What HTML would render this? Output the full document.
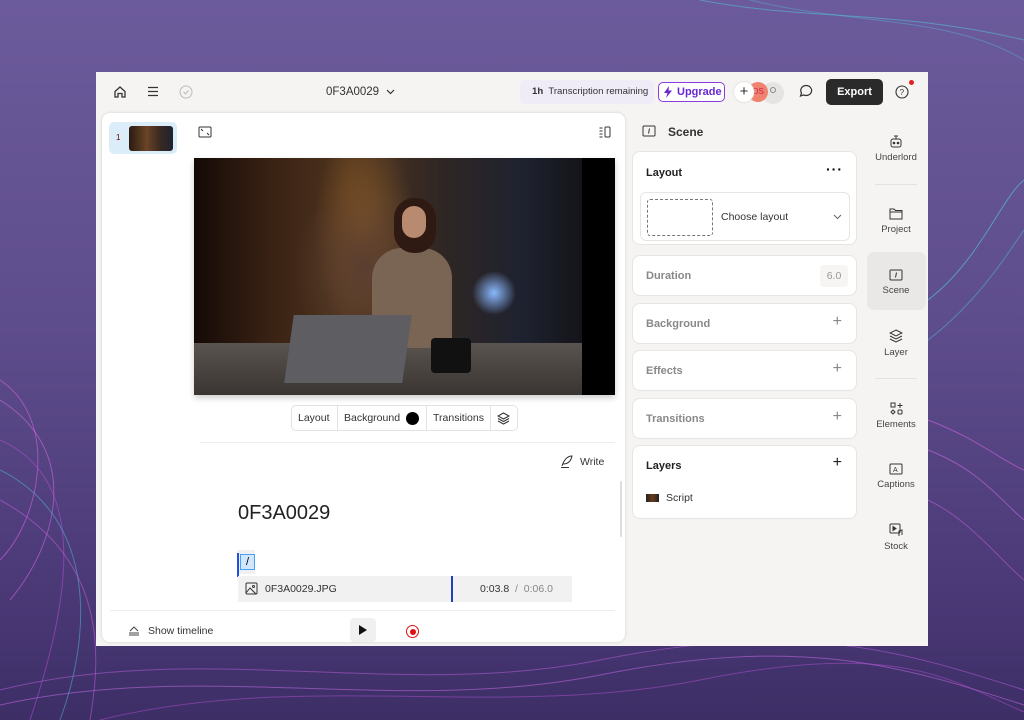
<!DOCTYPE html>
<html><head><style>
*{box-sizing:border-box;margin:0;padding:0}
body{width:1024px;height:720px;overflow:hidden;position:relative;font-family:"Liberation Sans",sans-serif;background:linear-gradient(180deg,#6c5b9c 0%,#5e4d8c 45%,#4c3a78 80%,#3d2e66 100%)}
.win{position:absolute;left:96px;top:72px;width:832px;height:574px;background:#f5f4f2}
.t{position:absolute;font-size:11px;color:#333;white-space:nowrap}
.card{position:absolute;left:632px;width:225px;background:#fff;border:1px solid #e6e5e2;border-radius:8px}
.card .h{position:absolute;left:13px;font-size:11px;color:#888;font-weight:bold}
.card .p{position:absolute;right:14px;font-size:16px;color:#888;font-weight:300}
.side{position:absolute;left:866px;width:60px;text-align:center;font-size:9.5px;color:#444}
.side svg{display:block;margin:0 auto 4px}
</style></head><body>
<svg style="position:absolute;left:0;top:0" width="1024" height="720">
<g fill="none" stroke-width="1">
<path d="M0 380 C60 420 40 520 0 560" stroke="#d060e0" opacity=".6"/>
<path d="M0 400 C80 450 60 540 10 600" stroke="#e070f0" opacity=".5"/>
<path d="M0 440 C90 480 70 600 30 720" stroke="#c050d8" opacity=".5"/>
<path d="M0 470 C100 520 90 640 60 720" stroke="#50c0e0" opacity=".5"/>
<path d="M0 500 C110 560 100 660 90 720" stroke="#d060e0" opacity=".5"/>
<path d="M928 300 C980 260 1000 200 1024 180" stroke="#50d0e0" opacity=".6"/>
<path d="M928 340 C980 300 1010 250 1024 230" stroke="#50c0e0" opacity=".5"/>
<path d="M928 420 C980 440 1000 460 1024 470" stroke="#d060e0" opacity=".6"/>
<path d="M928 450 C980 470 1000 500 1024 520" stroke="#e070f0" opacity=".5"/>
<path d="M928 500 C970 520 1000 560 1024 580" stroke="#d060e0" opacity=".5"/>
<path d="M0 690 C200 640 400 700 600 660 S900 650 1024 690" stroke="#c060e0" opacity=".5"/>
<path d="M0 705 C200 660 400 715 600 675 S900 665 1024 705" stroke="#d070f0" opacity=".5"/>
<path d="M100 720 C300 670 500 720 700 680 S950 680 1024 712" stroke="#b050d0" opacity=".5"/>
<path d="M700 0 C800 20 900 10 1024 40" stroke="#50d0e0" opacity=".5"/>
<path d="M750 0 C850 25 950 15 1024 60" stroke="#50c0e0" opacity=".4"/>
</g></svg>
<div class="win">
<svg style="position:absolute;left:17px;top:13px" width="14" height="14" viewBox="0 0 14 14" fill="none" stroke="#333" stroke-width="1.3"><path d="M2 6.5L7 2l5 4.5V12H9V8.5H5V12H2z"/></svg>
<svg style="position:absolute;left:51px;top:14px" width="12" height="11" stroke="#333" stroke-width="1.2"><path d="M1 1.5h10M1 5.5h10M1 9.5h10"/></svg>
<svg style="position:absolute;left:83px;top:13px" width="14" height="14" fill="none" stroke="#bbb"><circle cx="7" cy="7" r="6"/><path d="M4.5 7l2 2 3-3.5"/></svg>
<div class="t" style="left:230px;top:14px;font-size:11.5px">0F3A0029</div>
<svg style="position:absolute;left:290px;top:17px" width="9" height="6" fill="none" stroke="#333" stroke-width="1.2"><path d="M1 1l3.5 3.5L8 1"/></svg>
<div style="position:absolute;left:424px;top:8px;width:134px;height:24px;background:#efecf8;border-radius:6px"></div>
<div class="t" style="left:436px;top:14px;font-size:9.6px"><b>1h</b>&nbsp; Transcription remaining</div>
<div style="position:absolute;left:562px;top:10px;width:67px;height:20px;border:1.5px solid #8a3ee0;border-radius:5px;background:#fff;color:#6a28d0;font-size:11px;font-weight:bold;line-height:17px;padding-left:18px;display:flex;align-items:center">Upgrade</div>
<svg style="position:absolute;left:567px;top:14px" width="10" height="12"><path d="M6 0L1 7h3.5L3 12l6-7.5H5.5z" fill="#6a28d0"/></svg>
<div style="position:absolute;left:666px;top:10px;width:22px;height:22px;border-radius:50%;background:#e6e4e2"></div>
<div style="position:absolute;left:652px;top:10px;width:20px;height:20px;border-radius:50%;background:#f08270;font-size:8px;color:#c24;line-height:20px;text-align:center">OS</div>
<div style="position:absolute;left:638px;top:10px;width:20px;height:20px;border-radius:50%;background:#fff;box-shadow:0 0 2px #ccc;font-size:15px;line-height:19px;text-align:center;color:#333">+</div>
<div style="position:absolute;left:674px;top:15px;width:6px;height:6px;border-radius:50%;border:1px solid #888"></div>
<svg style="position:absolute;left:703px;top:12px" width="14" height="14" fill="none" stroke="#333" stroke-width="1.2"><path d="M7 1.5a5.5 5 0 1 1-2.5 9.4L1.5 12l1-3A5.5 5 0 0 1 7 1.5z"/></svg>
<div style="position:absolute;left:730px;top:7px;width:57px;height:26px;background:#2a2a2a;border-radius:5px;color:#fff;font-size:11px;font-weight:bold;line-height:26px;text-align:center">Export</div>
<svg style="position:absolute;left:799px;top:12px" width="16" height="16" fill="none" stroke="#333" stroke-width="1.1"><circle cx="7" cy="8" r="6"/><text x="4.6" y="11" font-size="8" fill="#333" stroke="none" font-family="Liberation Sans">?</text></svg>
<div style="position:absolute;left:813px;top:8px;width:5px;height:5px;border-radius:50%;background:#e02020"></div>
<div style="position:absolute;left:6px;top:41px;width:523px;height:529px;background:#fff;border-radius:8px;box-shadow:0 0 3px rgba(0,0,0,.15)">
<div style="position:absolute;left:7px;top:9px;width:68px;height:32px;background:#dcedfa;border-radius:5px"></div>
<div class="t" style="left:14px;top:20px;font-size:8px;color:#600">1</div>
<div style="position:absolute;left:27px;top:13px;width:44px;height:25px;border-radius:3px;background:linear-gradient(90deg,#2a1a12,#6a4426 40%,#3a2a22 70%,#1e2230)"></div>
<svg style="position:absolute;left:96px;top:13px" width="14" height="12" fill="none" stroke="#333"><rect x="1" y="1" width="12" height="10" rx="1"/><path d="M3 3l2 2M11 9l-2-2"/></svg>
<svg style="position:absolute;left:497px;top:13px" width="12" height="12" fill="none" stroke="#333"><path d="M0.5 2h3M0.5 5h3M0.5 8h3M0.5 11h3"/><rect x="6" y="1" width="5" height="10" rx="1"/></svg>
<div style="position:absolute;left:92px;top:45px;width:421px;height:237px;background:#000;overflow:hidden;box-shadow:0 3px 6px rgba(0,0,0,.2)">
<div style="position:absolute;left:0;top:0;width:388px;height:237px;background:radial-gradient(ellipse 70px 90px at 170px 110px,#5a3e30,transparent),radial-gradient(ellipse 50px 110px at 170px 70px,rgba(200,130,50,.45),transparent),radial-gradient(circle 22px at 300px 135px,#8ab8ff,transparent),linear-gradient(90deg,#140a06 0%,#3a2214 20%,#4e341e 40%,#2e2624 65%,#1e2230 85%,#141418 100%)"></div>
<div style="position:absolute;left:0;top:185px;width:388px;height:52px;background:linear-gradient(180deg,#5a5450,#3a3432)"></div>
<div style="position:absolute;left:178px;top:90px;width:80px;height:100px;background:#7a6454;border-radius:30px 30px 0 0"></div>
<div style="position:absolute;left:200px;top:40px;width:42px;height:55px;background:#2e1a12;border-radius:20px"></div>
<div style="position:absolute;left:208px;top:48px;width:24px;height:32px;background:#b88a70;border-radius:12px"></div>
<div style="position:absolute;left:95px;top:157px;width:118px;height:68px;background:#5e5e62;transform:skewX(-8deg)"></div>
<div style="position:absolute;left:237px;top:180px;width:40px;height:35px;background:#111;border-radius:4px"></div>
</div>
<div style="position:absolute;left:189px;top:292px;width:227px;height:26px;border:1px solid #e2e2e2;border-radius:5px;font-size:10.5px;color:#333">
<span style="position:absolute;left:6px;top:6px">Layout</span>
<span style="position:absolute;left:45px;top:0;height:24px;border-left:1px solid #e2e2e2"></span>
<span style="position:absolute;left:52px;top:6px">Background</span>
<span style="position:absolute;left:114px;top:6px;width:13px;height:13px;border-radius:50%;background:#000"></span>
<span style="position:absolute;left:134px;top:0;height:24px;border-left:1px solid #e2e2e2"></span>
<span style="position:absolute;left:141px;top:6px">Transitions</span>
<span style="position:absolute;left:198px;top:0;height:24px;border-left:1px solid #e2e2e2"></span>
<svg style="position:absolute;left:205px;top:6px" width="13" height="13" fill="none" stroke="#333"><path d="M6.5 1L12 4 6.5 7 1 4z M1 6.5l5.5 3 5.5-3 M1 9l5.5 3 5.5-3"/></svg>
</div>
<div style="position:absolute;left:98px;top:329px;width:415px;border-top:1px solid #eee"></div>
<svg style="position:absolute;left:458px;top:341px" width="14" height="14" fill="none" stroke="#333"><path d="M2 12c2-6 5-10 10-10-1 5-4 8-9 8M1 13.5h8"/></svg>
<div class="t" style="left:478px;top:343px;font-size:10.5px">Write</div>
<div class="t" style="left:136px;top:389px;font-size:20px;color:#222">0F3A0029</div>
<div style="position:absolute;left:135px;top:437px;width:18px;height:24px;background:#eef0f2"></div>
<div style="position:absolute;left:135px;top:440px;width:2px;height:24px;background:#2050e0"></div>
<div style="position:absolute;left:138px;top:441px;width:15px;height:16px;background:#cfe6fb;border:1px solid #4aa0f0;font-size:11px;text-align:center;line-height:14px">/</div>
<div style="position:absolute;left:136px;top:463px;width:334px;height:26px;background:#f1f1f1"></div>
<svg style="position:absolute;left:143px;top:469px" width="13" height="13" fill="none" stroke="#333"><rect x="1" y="1" width="11" height="11" rx="1"/><circle cx="8.5" cy="4.5" r="1"/><path d="M1 11l4-5 6 6"/></svg>
<div class="t" style="left:163px;top:470px;font-size:10.5px">0F3A0029.JPG</div>
<div style="position:absolute;left:349px;top:463px;width:1.5px;height:26px;background:#2040c0"></div>
<div class="t" style="left:378px;top:470px;font-size:10.5px">0:03.8 &nbsp;<span style="color:#888">/ &nbsp;0:06.0</span></div>
<div style="position:absolute;left:518px;top:368px;width:2px;height:56px;background:#ddd;border-radius:1px"></div>
<div style="position:absolute;left:8px;top:497px;width:505px;border-top:1px solid #eee"></div>
<svg style="position:absolute;left:26px;top:512px" width="12" height="11" fill="none" stroke="#444"><path d="M2 6L6 2l4 4M1 8h10M1 10h10"/></svg>
<div class="t" style="left:46px;top:512px;font-size:10.5px">Show timeline</div>
<div style="position:absolute;left:248px;top:505px;width:26px;height:24px;background:#f0f0f0;border-radius:4px"></div>
<svg style="position:absolute;left:256px;top:511px" width="10" height="12"><path d="M1 1l8 5-8 5z" fill="#111"/></svg>
<div style="position:absolute;left:304px;top:512px;width:13px;height:13px;border-radius:50%;border:1.5px solid #e01010"></div>
<div style="position:absolute;left:307.5px;top:515.5px;width:6px;height:6px;border-radius:50%;background:#e01010"></div>
</div>
<svg style="position:absolute;left:546px;top:53px" width="14" height="12" fill="none" stroke="#333"><rect x="1" y="1" width="12" height="10" rx="1"/><path d="M7.5 3.5l-1 5"/></svg>
<div class="t" style="left:572px;top:53px;font-size:12px;font-weight:bold;color:#333">Scene</div>
</div>
<div class="card" style="top:151px;height:94px">
<div class="h" style="top:15px;color:#222">Layout</div>
<div style="position:absolute;right:13px;top:9px;font-size:14px;font-weight:bold;letter-spacing:1px">···</div>
<div style="position:absolute;left:7px;top:40px;width:210px;height:49px;border:1px solid #e6e5e2;border-radius:6px">
<div style="position:absolute;left:6px;top:6px;width:66px;height:37px;border:1px dashed #777;border-radius:3px"></div>
<div class="t" style="left:80px;top:18px;font-size:10.5px">Choose layout</div>
<svg style="position:absolute;left:192px;top:21px" width="9" height="6" fill="none" stroke="#666"><path d="M1 1l3.5 3.5L8 1"/></svg>
</div></div>
<div class="card" style="top:255px;height:41px"><div class="h" style="top:14px">Duration</div><div style="position:absolute;right:8px;top:9px;width:28px;height:22px;background:#f6f5f3;border-radius:3px;font-size:10.5px;color:#999;text-align:center;line-height:22px">6.0</div></div>
<div class="card" style="top:303px;height:41px"><div class="h" style="top:14px">Background</div><div class="p" style="top:9px">+</div></div>
<div class="card" style="top:350px;height:41px"><div class="h" style="top:14px">Effects</div><div class="p" style="top:9px">+</div></div>
<div class="card" style="top:398px;height:41px"><div class="h" style="top:14px">Transitions</div><div class="p" style="top:9px">+</div></div>
<div class="card" style="top:445px;height:74px"><div class="h" style="top:14px;color:#222">Layers</div><div class="p" style="top:8px;color:#222">+</div>
<div style="position:absolute;left:13px;top:48px;width:13px;height:8px;background:linear-gradient(90deg,#222,#6a3a1a,#222)"></div>
<div class="t" style="left:33px;top:46px;font-size:10.5px">Script</div></div>
<div class="side" style="top:134px"><svg width="14" height="14" fill="none" stroke="#333"><rect x="2" y="5" width="10" height="8" rx="2"/><circle cx="5" cy="9" r=".8" fill="#333"/><circle cx="9" cy="9" r=".8" fill="#333"/><path d="M5 2h4M7 2v3"/></svg>Underlord</div>
<div style="position:absolute;left:875px;top:184px;width:42px;border-top:1px solid #e2e2e2"></div>
<div class="side" style="top:207px"><svg width="14" height="13" fill="none" stroke="#333"><path d="M1 2h4l1.5 1.5H13V12H1z M1 5h12"/></svg>Project</div>
<div style="position:absolute;left:867px;top:252px;width:59px;height:58px;background:#e9e8e6;border-radius:7px"></div>
<div class="side" style="top:269px"><svg width="14" height="12" fill="none" stroke="#333"><rect x="1" y="1" width="12" height="10" rx="1"/><path d="M7.5 3.5l-1 5"/></svg>Scene</div>
<div class="side" style="top:329px"><svg width="14" height="14" fill="none" stroke="#333"><path d="M7 1L13 4 7 7 1 4z M1 7l6 3 6-3 M1 10l6 3 6-3"/></svg>Layer</div>
<div style="position:absolute;left:875px;top:378px;width:42px;border-top:1px solid #e2e2e2"></div>
<div class="side" style="top:402px"><svg width="13" height="13" fill="none" stroke="#333"><rect x="1" y="1" width="4" height="4"/><path d="M10 1v5M7.5 3.5h5"/><path d="M3 8l2 2-2 2-2-2z"/><rect x="8" y="8" width="4" height="4" rx="1"/></svg>Elements</div>
<div class="side" style="top:463px"><svg width="14" height="12" fill="none" stroke="#333"><rect x="1" y="1" width="12" height="10" rx="1"/><text x="4" y="9" font-size="7" fill="#333" stroke="none" font-family="Liberation Sans">A</text></svg>Captions</div>
<div class="side" style="top:523px"><svg width="14" height="14" fill="none" stroke="#333"><rect x="1" y="1" width="10" height="9" rx="1"/><path d="M4 3.5l3 2-3 2z" fill="#333"/><path d="M10 13V8l3-1v5"/></svg>Stock</div>
</body></html>
